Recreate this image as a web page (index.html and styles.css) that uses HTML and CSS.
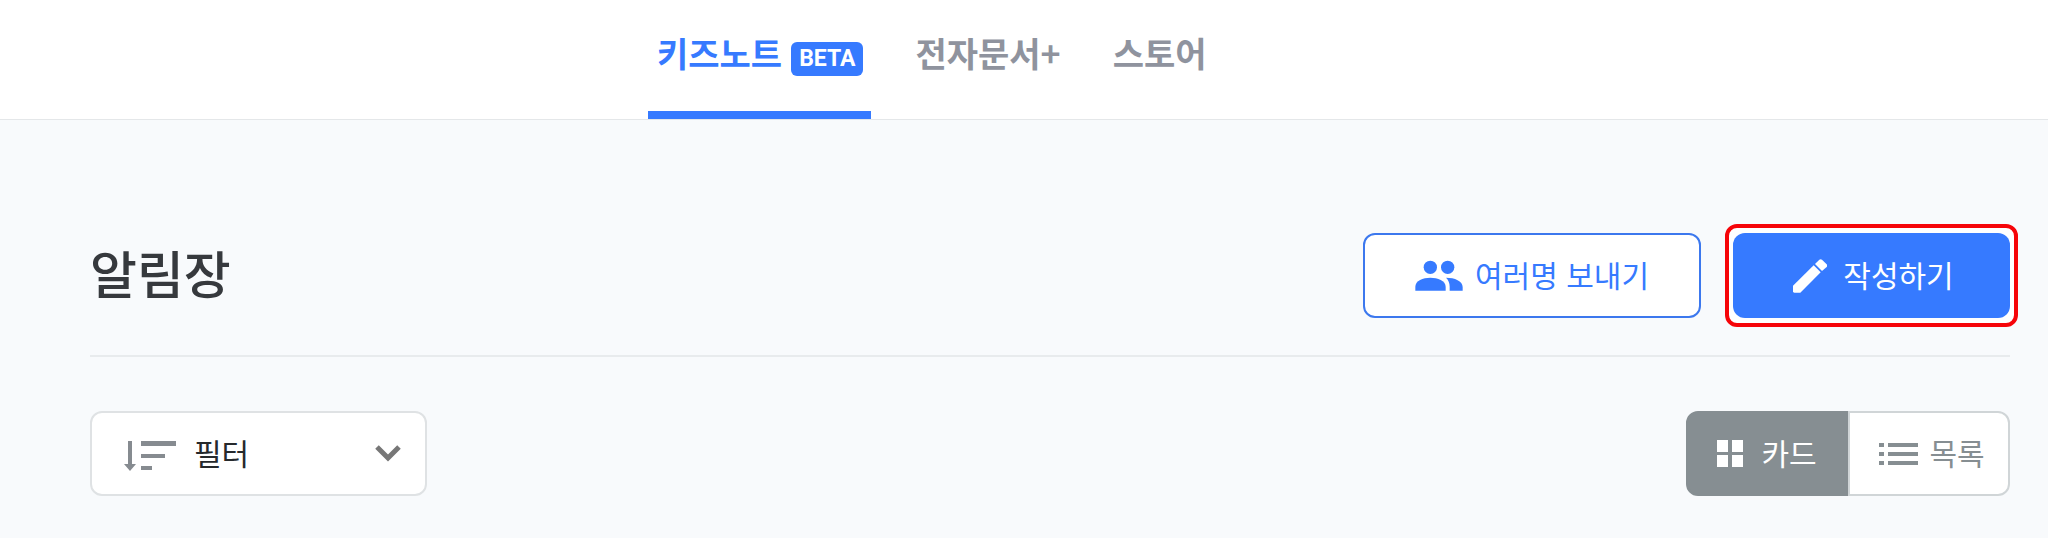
FILE: index.html
```
<!DOCTYPE html>
<html lang="ko">
<head>
    <meta charset="UTF-8">
    <meta name="viewport" content="width=device-width, initial-scale=1.0">
    <title>알림장</title>
    <link rel="stylesheet" href="styles.css">
</head>
<body>
    <header class="site-header">
        <nav class="main-nav">
            <a href="#" class="nav-item active">키즈노트<span class="badge">BETA</span></a>
            <a href="#" class="nav-item">전자문서+</a>
            <a href="#" class="nav-item">스토어</a>
        </nav>
    </header>

    <main class="content">
        <div class="page-head">
            <h1>알림장</h1>
            <div class="actions">
                <button type="button" class="btn btn-outline">
                    <svg width="48" height="32" viewBox="0 0 144 96" fill="currentColor" aria-hidden="true">
                        <circle cx="46" cy="22" r="20"/>
                        <circle cx="98" cy="22" r="20"/>
                        <path d="M1 92V80C1 62 24 53 46 53s46 9 46 27v12z"/>
                        <path d="M93 53c26 0 50 10 50 28v11h-39V80c0-12-4-20-11-27z"/>
                    </svg>
                    <span class="label">여러명 보내기</span>
                </button>
                <div class="highlight">
                    <button type="button" class="btn btn-primary">
                        <svg width="34" height="34" viewBox="0 0 102 102" fill="currentColor" aria-hidden="true">
                            <path d="M0 80L62 19l21 21-61 61H4q-4 0-4-4z"/>
                            <path d="M66 15L79 2q4-3 8 0l14 14q3 4 0 8L87 36z"/>
                        </svg>
                        <span class="label">작성하기</span>
                    </button>
                </div>
            </div>
        </div>

        <div class="toolbar">
            <div class="filter">
                <svg width="52" height="36" viewBox="0 0 52 36" fill="currentColor" aria-hidden="true">
                    <path d="M4 5h4v23h4l-6 7-6-7h4zM17 5h35v5H17zM17 18h24v4H17zM17 30h11v4H17z"/>
                </svg>
                <select aria-label="필터">
                    <option>필터</option>
                </select>
                <svg class="chevron" width="26" height="17" viewBox="0 0 26 17" fill="none" stroke="currentColor" stroke-width="5" aria-hidden="true">
                    <path d="M2 2l11 11L24 2"/>
                </svg>
            </div>

            <div class="view-toggle">
                <button type="button" class="view card-view" aria-pressed="true">
                    <svg width="26" height="27" viewBox="0 0 26 27" fill="currentColor" aria-hidden="true">
                        <path d="M0 0h11v12H0zM15 0h11v12H15zM0 15h11v12H0zM15 15h11v12H15z"/>
                    </svg>
                    <span class="label">카드</span>
                </button>
                <button type="button" class="view list-view" aria-pressed="false">
                    <svg width="39" height="22" viewBox="0 0 39 22" fill="currentColor" aria-hidden="true">
                        <path d="M0 0h5v4H0zM9 0h30v4H9zM0 9h5v4H0zM9 9h30v4H9zM0 18h5v4H0zM9 18h30v4H9z"/>
                    </svg>
                    <span class="label">목록</span>
                </button>
            </div>
        </div>
    </main>
</body>
</html>
```
FILE: styles.css
```
* {
    box-sizing: border-box;
}
body {
    margin: 0;
    min-height: 100vh;
    background-color: #f8fafc;
    font-family: "Noto Sans CJK KR", sans-serif;
    font-size: 30px;
    color: #36393d;
}
button, select {
    font: inherit;
    cursor: pointer;
}
svg {
    flex: none;
}

/* header */
.site-header {
    height: 120px;
    padding-left: 648px;
    background-color: #fff;
    border-bottom: 1px solid #e4e7e9;
}
.main-nav {
    display: flex;
    gap: 35px;
    height: 119px;
}
.nav-item {
    display: flex;
    align-items: flex-start;
    padding: 28px 8px 0 9px;
    font-size: 34px;
    line-height: 50px;
    font-weight: bold;
    color: #8f939e;
    text-decoration: none;
}
.nav-item.active {
    color: #367aff;
    border-bottom: 8px solid #367aff;
}
.badge {
    margin-top: 14px;
    margin-left: 9px;
    padding: 0 8px;
    border-radius: 6px;
    background-color: #367aff;
    color: #fff;
    font-family: Roboto, sans-serif;
    font-size: 23px;
    line-height: 34px;
}

/* content */
.content {
    padding: 104px 38px 40px 90px;
}
.page-head {
    display: flex;
    align-items: center;
    justify-content: space-between;
    padding-bottom: 28px;
    border-bottom: 2px solid #e8ebed;
}
h1 {
    margin: 0;
    padding-bottom: 8px;
    font-size: 51px;
    line-height: 72px;
    font-weight: 500;
}
.actions {
    display: flex;
    align-items: center;
    gap: 24px;
    margin-right: -8px;
}
.btn {
    display: flex;
    align-items: center;
    justify-content: center;
    height: 85px;
    border-radius: 12px;
    border: 0;
}
.label {
    padding-bottom: 4px;
}
.btn-outline {
    width: 338px;
    gap: 12px;
    border: 2px solid #3c78ee;
    background-color: #fff;
    color: #367aff;
}
.highlight {
    padding: 5px 4px;
    border: 4px solid #f60409;
    border-radius: 12px;
    background-color: #fff;
}
.btn-primary {
    width: 277px;
    gap: 16px;
    padding-left: 10px;
    background-color: #367aff;
    color: #fff;
}

/* toolbar */
.toolbar {
    display: flex;
    justify-content: space-between;
    padding-top: 54px;
}
.filter {
    display: flex;
    align-items: center;
    width: 337px;
    height: 85px;
    padding: 0 24px 0 32px;
    border: 2px solid #dfe2e4;
    border-radius: 12px;
    background-color: #fff;
    color: #868b90;
}
.filter select {
    flex: 1;
    appearance: none;
    height: 80px;
    padding: 0 0 4px 18px;
    border: 0;
    background: none;
    color: #26292c;
}
.chevron {
    color: #777;
}
.view-toggle {
    display: flex;
}
.view {
    display: flex;
    align-items: center;
    justify-content: center;
    width: 162px;
    height: 85px;
    padding: 0;
    border: 2px solid #868e92;
}
.card-view {
    gap: 18px;
    border-radius: 12px 0 0 12px;
    background-color: #868e92;
    color: #fff;
}
.list-view {
    gap: 11px;
    padding-left: 6px;
    border-color: #d0d5d7;
    border-radius: 0 12px 12px 0;
    background-color: #fff;
    color: #868e92;
}
```
